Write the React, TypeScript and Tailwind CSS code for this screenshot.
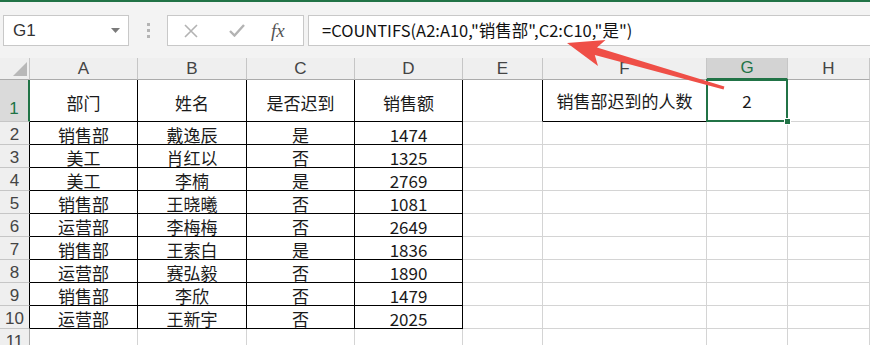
import React from 'react';

const cols = [
  { k: 'A', w: 108 },
  { k: 'B', w: 109 },
  { k: 'C', w: 108 },
  { k: 'D', w: 108 },
  { k: 'E', w: 80 },
  { k: 'F', w: 164 },
  { k: 'G', w: 81 },
  { k: 'H', w: 82 },
];

const table = [
  ['部门', '姓名', '是否迟到', '销售额'],
  ['销售部', '戴逸辰', '是', '1474'],
  ['美工', '肖红以', '否', '1325'],
  ['美工', '李楠', '是', '2769'],
  ['销售部', '王晓曦', '否', '1081'],
  ['运营部', '李梅梅', '否', '2649'],
  ['销售部', '王索白', '是', '1836'],
  ['运营部', '赛弘毅', '否', '1890'],
  ['销售部', '李欣', '否', '1479'],
  ['运营部', '王新宇', '否', '2025'],
];

const cjk = "font-['Noto_Sans_CJK_SC',sans-serif]";

function Cell({ r, c }: { r: number; c: number }) {
  const inTable = r <= 10 && c <= 3;
  const rightBlack = inTable || (r === 1 && c === 4);
  const bottomBlack = inTable || (r === 1 && c === 5);
  const cls = [
    'relative flex items-center justify-center border-r border-b',
    rightBlack ? 'border-r-black' : 'border-r-[#d4d4d4]',
    bottomBlack ? 'border-b-black' : 'border-b-[#d4d4d4]',
  ].join(' ');

  let content: React.ReactNode = null;
  if (inTable) {
    const v = table[r - 1][c];
    const isNum = /^\d+$/.test(v);
    content = (
      <span className={isNum ? `${cjk} text-[17px] leading-none pt-[3px]` : `${cjk} text-[17px] leading-none pt-[3px]`}>
        {v}
      </span>
    );
  }
  if (r === 1 && c === 5) {
    content = <span className={`${cjk} text-[17px] leading-none`}>销售部迟到的人数</span>;
  }
  if (r === 1 && c === 6) {
    content = (
      <>
        <span className={`${cjk} text-[17px] leading-none`}>2</span>
        <div className="absolute -left-[1px] -top-[1px] -right-[1px] -bottom-[1px] border-2 border-[#217346] z-10">
          <div className="absolute -right-[5px] -bottom-[5px] w-[7px] h-[7px] bg-[#217346] border border-white" />
        </div>
      </>
    );
  }
  return <div className={cls}>{content}</div>;
}

export default function App() {
  const rows = Array.from({ length: 11 }, (_, i) => i + 1);
  return (
    <div className="relative w-[870px] h-[345px] overflow-hidden bg-white text-[#1a1a1a]">
      {/* toolbar */}
      <div className="h-[58px] border-t-2 border-[#217346] bg-[#f3f3f3] flex items-start pt-[13px]">
        <div className="ml-[3px] w-[126px] h-[31px] bg-white border border-[#c8c8c8] flex items-center justify-between pl-[9px] pr-[8px]">
          <span className="font-['Liberation_Sans',sans-serif] text-[17px] text-[#333]">G1</span>
          <svg width="9" height="5" viewBox="0 0 9 5">
            <path d="M0 0 L9 0 L4.5 5 Z" fill="#7a7a7a" />
          </svg>
        </div>
        <div className="w-[38px] h-[31px] flex flex-col items-center justify-center gap-[3px]">
          <div className="w-[3px] h-[3px] bg-[#b4b4b4]" />
          <div className="w-[3px] h-[3px] bg-[#b4b4b4]" />
          <div className="w-[3px] h-[3px] bg-[#b4b4b4]" />
        </div>
        <div className="w-[137px] h-[31px] bg-white border border-[#c8c8c8] flex items-center">
          <svg className="ml-[16px]" width="14" height="14" viewBox="0 0 14 14">
            <path d="M1 1 L13 13 M13 1 L1 13" stroke="#b3b3b3" strokeWidth="1.6" />
          </svg>
          <svg className="ml-[31px]" width="16" height="13" viewBox="0 0 16 13">
            <path d="M1 7 L5.5 11.5 L15 1" stroke="#b3b3b3" strokeWidth="2.4" fill="none" />
          </svg>
          <span className="ml-[26px] font-['Liberation_Serif',serif] italic text-[19px] text-[#555] leading-none">
            fx
          </span>
        </div>
        <div className="ml-[4px] flex-1 h-[31px] bg-white border border-[#c8c8c8] border-r-0 flex items-center pl-[13px]">
          <span className={`${cjk} text-[16.5px] text-[#111]`}>=COUNTIFS(A2:A10,"销售部",C2:C10,"是")</span>
        </div>
      </div>

      {/* sheet grid */}
      <div className="grid grid-cols-[30px_108px_109px_108px_108px_80px_164px_81px_82px] grid-rows-[22px_42px_repeat(10,23px)_23px]">
        <div className="relative bg-[#efefef] border-r border-b border-r-[#c6c6c6] border-b-[#ababab]">
          <svg className="absolute left-[13px] top-[4px]" width="14" height="14" viewBox="0 0 14 14">
            <path d="M14 0 L14 14 L0 14 Z" fill="#b8b8b8" />
          </svg>
        </div>
        {cols.map((col) =>
          col.k === 'G' ? (
            <div
              key={col.k}
              className="flex items-center justify-center bg-[#d3d3d3] border-r border-r-[#c6c6c6] border-b-2 border-b-[#217346] font-['Liberation_Sans',sans-serif] text-[17px] text-[#217346]"
            >
              {col.k}
            </div>
          ) : (
            <div
              key={col.k}
              className="flex items-center justify-center bg-[#efefef] border-r border-b border-r-[#c6c6c6] border-b-[#ababab] font-['Liberation_Sans',sans-serif] text-[17px] text-[#444]"
            >
              {col.k}
            </div>
          )
        )}
        {rows.map((r) => (
          <React.Fragment key={r}>
            {r === 1 ? (
              <div className="flex items-end justify-center pb-[1px] bg-[#dadada] border-b border-b-[#c6c6c6] border-r-2 border-r-[#217346] font-['Liberation_Sans',sans-serif] text-[17px] leading-[22px] text-[#217346]">
                1
              </div>
            ) : (
              <div
                className={`flex items-center justify-center bg-[#efefef] border-b border-b-[#c6c6c6] border-r ${
                  r <= 10 ? 'border-r-black' : 'border-r-[#ababab]'
                } font-['Liberation_Sans',sans-serif] text-[17px] leading-none pt-[2px] text-[#444]`}
              >
                {r}
              </div>
            )}
            {cols.map((_, c) => (
              <Cell key={c} r={r} c={c} />
            ))}
          </React.Fragment>
        ))}
      </div>

      {/* annotation arrow */}
      <svg className="absolute left-0 top-0 pointer-events-none z-20" width="870" height="345" viewBox="0 0 870 345">
        <polygon
          points="567,43 605.5,40 597,47.4 724.4,86.4 723.6,89.6 594.8,55.1 598,66"
          fill="#ef4f47"
        />
      </svg>
    </div>
  );
}
